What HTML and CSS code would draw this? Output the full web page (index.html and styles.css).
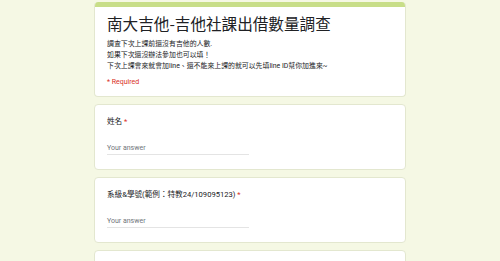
FILE: index.html
```html
<!DOCTYPE html>
<html lang="zh-Hant">
<head>
<meta charset="utf-8">
<link rel="stylesheet" href="styles.css">
</head>
<body>
<div class="form">
  <div class="card header-card">
    <div class="accent"></div>
    <div class="header-body">
      <h1 class="title">南大吉他-吉他社課出借數量調查</h1>
      <div class="desc">
        <div>調查下次上課前還沒有吉他的人數.</div>
        <div>如果下次還沒辦法參加也可以填！</div>
        <div>下次上課會來就會加line、還不能來上課的就可以先填line ID幫你加進來~</div>
      </div>
      <div class="required">* Required</div>
    </div>
  </div>
  <div class="card question">
    <div class="label">姓名 <span class="star">*</span></div>
    <div class="answer">Your answer</div>
  </div>
  <div class="card question">
    <div class="label">系級&amp;學號(範例：特教24/109095123) <span class="star">*</span></div>
    <div class="answer">Your answer</div>
  </div>
  <div class="card question"></div>
</div>
</body>
</html>
```
FILE: styles.css
```css
html, body {
  margin: 0;
  padding: 0;
  background: #f5f8e4;
}
body {
  font-family: Roboto, "Noto Sans CJK TC", sans-serif;
  color: #202124;
}
.form {
  width: 312px;
  margin: 2px auto 0;
  display: flex;
  flex-direction: column;
  gap: 7px;
}
.card {
  background: #fff;
  border: 1px solid #e3e7cf;
  border-radius: 4px;
  box-sizing: border-box;
}
.header-card {
  border-top: none;
  overflow: hidden;
}
.accent {
  height: 5px;
  background: #c8de88;
}
.header-body {
  padding: 7px 12px 9px;
}
.title {
  margin: 0;
  font-family: "Noto Sans CJK TC", sans-serif;
  font-weight: 400;
  font-size: 15.6px;
  line-height: 19.5px;
}
.desc {
  margin-top: 5px;
  font-size: 6.9px;
  line-height: 11px;
}
.required {
  margin-top: 5px;
  font-size: 7px;
  line-height: 10.7px;
  color: #d93025;
}
.question {
  height: 66px;
  padding: 11px 12px 0;
}
.label {
  font-size: 7.6px;
  line-height: 12px;
}
.star {
  color: #d93025;
}
.answer {
  margin-top: 15px;
  width: 142px;
  font-size: 7px;
  line-height: 10px;
  color: #70757a;
  padding-bottom: 1px;
  border-bottom: 1px solid #e4e4e4;
}
```
